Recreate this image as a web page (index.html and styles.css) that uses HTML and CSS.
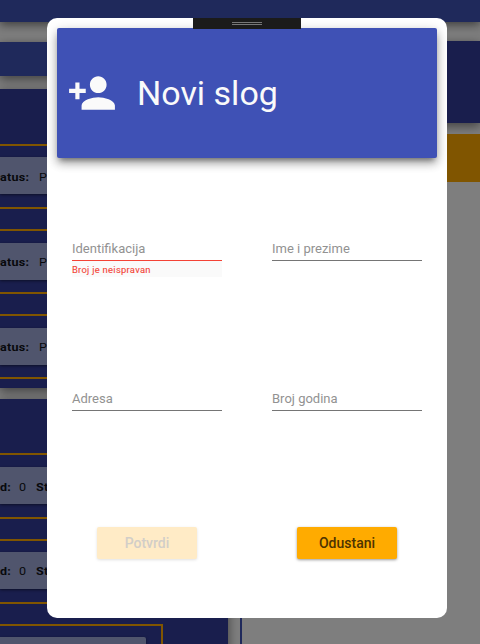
FILE: index.html
```html
<!DOCTYPE html>
<html lang="hr">
<head>
<meta charset="utf-8">
<title>Novi slog</title>
<link rel="stylesheet" href="styles.css">
</head>
<body>
<div class="page">
  <header class="topbar"></header>
  <div class="columns">
    <aside class="sidebar">
      <div class="search"></div>
      <section class="card">
        <div class="box"><div class="row"><b class="status">atus:</b><span>Po</span></div></div>
        <div class="box"><div class="row"><b class="status">atus:</b><span>Po</span></div></div>
        <div class="box"><div class="row"><b class="status">atus:</b><span>Po</span></div></div>
      </section>
      <section class="card">
        <div class="box"><div class="row"><b class="id">d:</b><span class="count">0</span><b>Status:</b></div></div>
        <div class="box"><div class="row"><b class="id">d:</b><span class="count">0</span><b>Status:</b></div></div>
        <div class="box"><div class="row"></div></div>
      </section>
    </aside>
    <main class="content">
      <div class="banner"></div>
      <div class="accent"></div>
      <div class="panel"></div>
    </main>
  </div>
</div>
<div class="dialog" role="dialog">
  <header class="title">
    <svg class="icon" viewBox="0 0 24 24"><path d="M15 12c2.21 0 4-1.79 4-4s-1.79-4-4-4-4 1.79-4 4 1.79 4 4 4zm-9-2V7H4v3H1v2h3v3h2v-3h3v-2H6zm9 4c-2.67 0-8 1.34-8 4v2h16v-2c0-2.66-5.33-4-8-4z"/></svg>
    <h1>Novi slog</h1>
  </header>
  <div class="fields">
    <div class="field invalid"><div class="input">Identifikacija</div><div class="error">Broj je neispravan</div></div>
    <div class="field"><div class="input">Ime i prezime</div></div>
    <div class="field"><div class="input">Adresa</div></div>
    <div class="field"><div class="input">Broj godina</div></div>
  </div>
  <div class="actions">
    <button class="button disabled">Potvrdi</button>
    <button class="button">Odustani</button>
  </div>
</div>
<div class="handle"><i></i><i></i></div>
</body>
</html>
```
FILE: styles.css
```css
* { box-sizing: border-box; }
body {
  margin: 0;
  height: 644px;
  position: relative;
  overflow: hidden;
  background: #7e7e7e;
  font-family: Roboto, sans-serif;
}
.page { height: 644px; overflow: hidden; }
.topbar {
  height: 22px;
  background: #1f295b;
  box-shadow: 0 3px 10px rgba(0, 0, 0, .5);
}
.columns { display: flex; gap: 12px; }
.sidebar { width: 228px; padding-top: 20px; }
.search {
  height: 34px;
  margin-bottom: 13px;
  background: #1f295b;
  box-shadow: 0 3px 10px rgba(0, 0, 0, .5);
}
.card {
  height: 299px;
  margin-bottom: 11px;
  padding-top: 55px;
  background: #191e4d;
  box-shadow: 0 3px 10px rgba(0, 0, 0, .5);
}
.card + .card { padding-top: 54px; }
.box {
  width: 163px;
  height: 65px;
  margin-bottom: 20px;
  padding-top: 11px;
  border: 2px solid #805500;
  border-left: 0;
}
.box + .box { padding-top: 12px; }
.card + .card .box { height: 65.5px; padding-top: 11.5px; }
.card + .card .box:last-child { padding-top: 11px; }
.row {
  display: flex;
  align-items: center;
  width: 146px;
  height: 37px;
  padding-top: 4px;
  background: #50556d;
  border-radius: 0 2px 2px 0;
  box-shadow: 0 1px 3px rgba(0, 0, 0, .5);
  color: #08090c;
  font-size: 11px;
}
.box + .box .row { padding-top: 2px; }
.row b, .row span {
  letter-spacing: .25px;
  transform: scaleX(1.14);
  transform-origin: left;
}
.row span { font-weight: 400; }
.status { width: 39px; }
.id { width: 19px; }
.count { width: 17px; }
.content { flex: 1; padding-top: 19px; }
.banner {
  height: 82px;
  margin-bottom: 11px;
  background: #191e4d;
  box-shadow: 0 3px 10px rgba(0, 0, 0, .5);
}
.accent { height: 48px; background: #805500; }
.panel { height: 480px; border-left: 2px solid #1f295b; }
.dialog {
  position: absolute;
  left: 47px;
  top: 18px;
  width: 400px;
  height: 600px;
  padding: 10px;
  border-radius: 10px;
  background: #fff;
}
.title {
  display: flex;
  align-items: center;
  height: 130px;
  padding-left: 10px;
  border-radius: 2px;
  background: #3f51b5;
  box-shadow: 0 5px 5px -3px rgba(0, 0, 0, .35), 0 6px 10px rgba(0, 0, 0, .2), 0 3px 12px rgba(0, 0, 0, .22);
  color: #fafafa;
}
.icon { width: 50px; height: 50px; fill: #fafafa; }
.title h1 { margin: 0 0 0 20px; font-size: 34px; font-weight: 400; line-height: 40px; }
.fields {
  display: grid;
  grid-template-columns: 150px 150px;
  grid-auto-rows: 150px;
  column-gap: 50px;
  padding: 80px 15px 0;
}
.input {
  height: 23px;
  border-bottom: 1px solid #757575;
  color: #929292;
  font-size: 13px;
  line-height: 21px;
}
.invalid .input { border-color: #f44336; }
.error {
  height: 16px;
  background: #fafafa;
  color: #f44336;
  font-size: 9.4px;
  letter-spacing: .28px;
  -webkit-text-stroke: .1px #f44336;
  line-height: 17px;
}
.actions { display: flex; gap: 100px; padding: 0 40px; margin-top: -11px; }
.button {
  width: 100px;
  height: 32px;
  padding: 0;
  border: 0;
  border-radius: 2px;
  background: #ffab00;
  box-shadow: 0 1px 3px rgba(0, 0, 0, .4);
  color: #4d3300;
  font: 500 14px/32px Roboto, sans-serif;
}
.disabled {
  background: #ffebc6;
  box-shadow: 0 1px 3px rgba(0, 0, 0, .12);
  color: #d2cec8;
}
.handle {
  position: absolute;
  left: 193px;
  top: 18px;
  display: flex;
  flex-direction: column;
  align-items: center;
  gap: 1px;
  width: 108px;
  height: 11px;
  padding-top: 4px;
  background: #1b1b1b;
}
.handle i { width: 30px; height: 1px; background: #777; }
```
